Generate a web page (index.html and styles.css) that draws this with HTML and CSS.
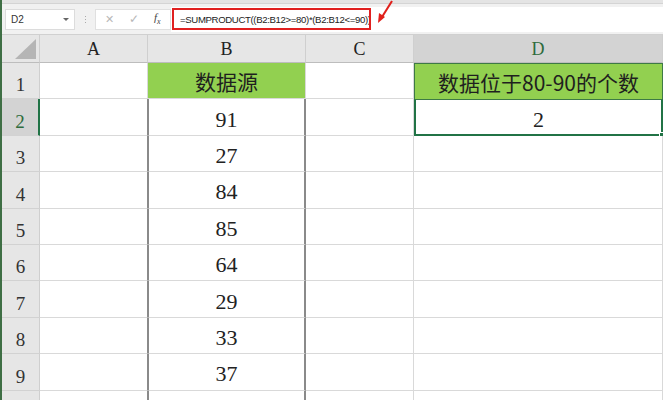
FILE: index.html
```html
<!DOCTYPE html>
<html>
<head>
<meta charset="utf-8">
<link rel="stylesheet" href="styles.css">
</head>
<body>
<div class="app">
  <div class="topstrip"></div>
  <div class="fbar">
    <div class="namebox"><span class="nb-text">D2</span><span class="nb-arrow"></span></div>
    <div class="dots"><i></i><i></i><i></i></div>
    <div class="iconbox">
      <span class="ic-x">✕</span>
      <span class="ic-ok">✓</span>
      <span class="ic-fx">f<sub>x</sub></span>
    </div>
    <div class="formula"><span class="formula-box">=SUMPRODUCT((B2:B12&gt;=80)*(B2:B12&lt;=90))</span></div>
  </div>
  <div class="sheet">
    <div class="ch corner"><span class="tri"></span></div>
    <div class="ch">A</div>
    <div class="ch">B</div>
    <div class="ch">C</div>
    <div class="ch ch-sel">D</div>

    <div class="rh">1</div><div class="c"></div><div class="c head">数据源</div><div class="c"></div><div class="c head dh">数据位于80-90的个数</div>
    <div class="rh rh-sel">2</div><div class="c a"></div><div class="c b">91</div><div class="c"></div><div class="c d2">2<span class="handle"></span></div>
    <div class="rh">3</div><div class="c a"></div><div class="c b">27</div><div class="c"></div><div class="c"></div>
    <div class="rh">4</div><div class="c a"></div><div class="c b">84</div><div class="c"></div><div class="c"></div>
    <div class="rh">5</div><div class="c a"></div><div class="c b">85</div><div class="c"></div><div class="c"></div>
    <div class="rh">6</div><div class="c a"></div><div class="c b">64</div><div class="c"></div><div class="c"></div>
    <div class="rh">7</div><div class="c a"></div><div class="c b">29</div><div class="c"></div><div class="c"></div>
    <div class="rh">8</div><div class="c a"></div><div class="c b">33</div><div class="c"></div><div class="c"></div>
    <div class="rh">9</div><div class="c a"></div><div class="c b">37</div><div class="c"></div><div class="c"></div>
    <div class="rh"></div><div class="c a"></div><div class="c b"></div><div class="c"></div><div class="c"></div>
  </div>
  <svg class="arrow" width="24" height="30" viewBox="0 0 24 30">
    <line x1="18" y1="1" x2="8" y2="17" stroke="#e0201b" stroke-width="2"/>
    <polygon points="4,23 5,13 11,17" fill="#e0201b"/>
  </svg>
</div>
</body>
</html>
```
FILE: styles.css
```css
html, body { margin: 0; padding: 0; }
body { width: 663px; height: 400px; overflow: hidden; background: #fff; }
.app { position: relative; width: 663px; height: 400px; overflow: hidden; border-left: 2px solid #3f6f45; box-sizing: border-box; }
.topstrip { height: 3px; background: #e4e4e4; border-bottom: 1px solid #d4d4d4; }
.fbar { height: 31px; background: #f1f1f1; display: flex; align-items: center; border-bottom: 1px solid #d0d0d0; box-sizing: border-box; font-family: "Liberation Sans", Arial, sans-serif; }
.namebox { margin-left: 3px; width: 70px; height: 21px; background: #fff; border: 1px solid #dcdcdc; box-sizing: border-box; display: flex; align-items: center; justify-content: space-between; padding: 0 5px 0 5px; }
.nb-text { font-size: 10px; color: #333; }
.nb-arrow { width: 0; height: 0; border-left: 3px solid transparent; border-right: 3px solid transparent; border-top: 3px solid #666; }
.dots { width: 20px; display: flex; flex-direction: column; align-items: center; gap: 2px; }
.dots i { width: 1px; height: 1px; background: #aaa; display: block; }
.iconbox { width: 76px; height: 21px; background: #fff; border: 1px solid #e0e0e0; box-sizing: border-box; display: flex; align-items: center; justify-content: space-around; padding: 0 2px; }
.ic-x { color: #b8b8b8; font-size: 11px; }
.ic-ok { color: #b8b8b8; font-size: 12px; }
.ic-fx { font-family: "Liberation Serif", serif; font-style: italic; font-size: 11px; color: #444; }
.ic-fx sub { font-size: 8px; }
.formula { flex: 1; height: 25px; background: #fff; display: flex; align-items: center; padding-left: 1px; }
.formula-box { height: 22px; width: 199px; border: 2px solid #e02020; box-sizing: border-box; font-size: 9.6px; color: #222; display: flex; align-items: center; padding-left: 6px; letter-spacing: -0.35px; white-space: nowrap; overflow: hidden; }
.sheet { display: grid; grid-template-columns: 38px 108px 158px 108px 249px; grid-template-rows: 28px repeat(10, 36.4px); }
.ch { background: #e6e6e6; border-right: 1px solid #cfcfcf; border-bottom: 1px solid #bdbdbd; box-sizing: border-box; font-family: "Liberation Serif", serif; font-size: 18px; color: #222; display: flex; align-items: center; justify-content: center; padding-top: 2px; }
.corner { position: relative; }
.tri { position: absolute; right: 3px; bottom: 3px; width: 0; height: 0; border-left: 21px solid transparent; border-bottom: 20px solid #b5b5b5; }
.ch-sel { background: #d3d3d3; color: #2e6b3c; border-bottom: 1px solid #bdbdbd; }
.rh { background: #e6e6e6; border-right: 1px solid #cfcfcf; border-bottom: 1px solid #d2d2d2; box-sizing: border-box; font-family: "Liberation Serif", serif; font-size: 19px; color: #333; display: flex; align-items: flex-end; justify-content: center; padding-bottom: 2px; }
.rh-sel { background: #d3d3d3; border-right: 2px solid #217346; color: #2e6b3c; }
.c { border-right: 1px solid #d9d9d9; border-bottom: 1px solid #d9d9d9; box-sizing: border-box; font-family: "Liberation Serif", serif; font-size: 22px; color: #222; display: flex; align-items: center; justify-content: center; position: relative; padding-top: 5px; }
.c.a { border-right: 1px solid #8a8a8a; }
.c.b { border-left: 1px solid #8a8a8a; border-right: 2px solid #8a8a8a; }
.head { background: #92d050; font-family: "Noto Sans CJK SC", sans-serif; font-size: 21px; color: #1f1f1f; padding-top: 1px; }
.dh { border: 1px solid #3d7a45; border-bottom: none; }
.d2 { border: 2px solid #217346; border-top: 1px solid #3d7a45; font-size: 22px; }
.handle { position: absolute; right: -3px; bottom: -3px; width: 5px; height: 5px; background: #217346; border: 1px solid #fff; box-sizing: border-box; }
.arrow { position: absolute; left: 372px; top: 0; }
```
